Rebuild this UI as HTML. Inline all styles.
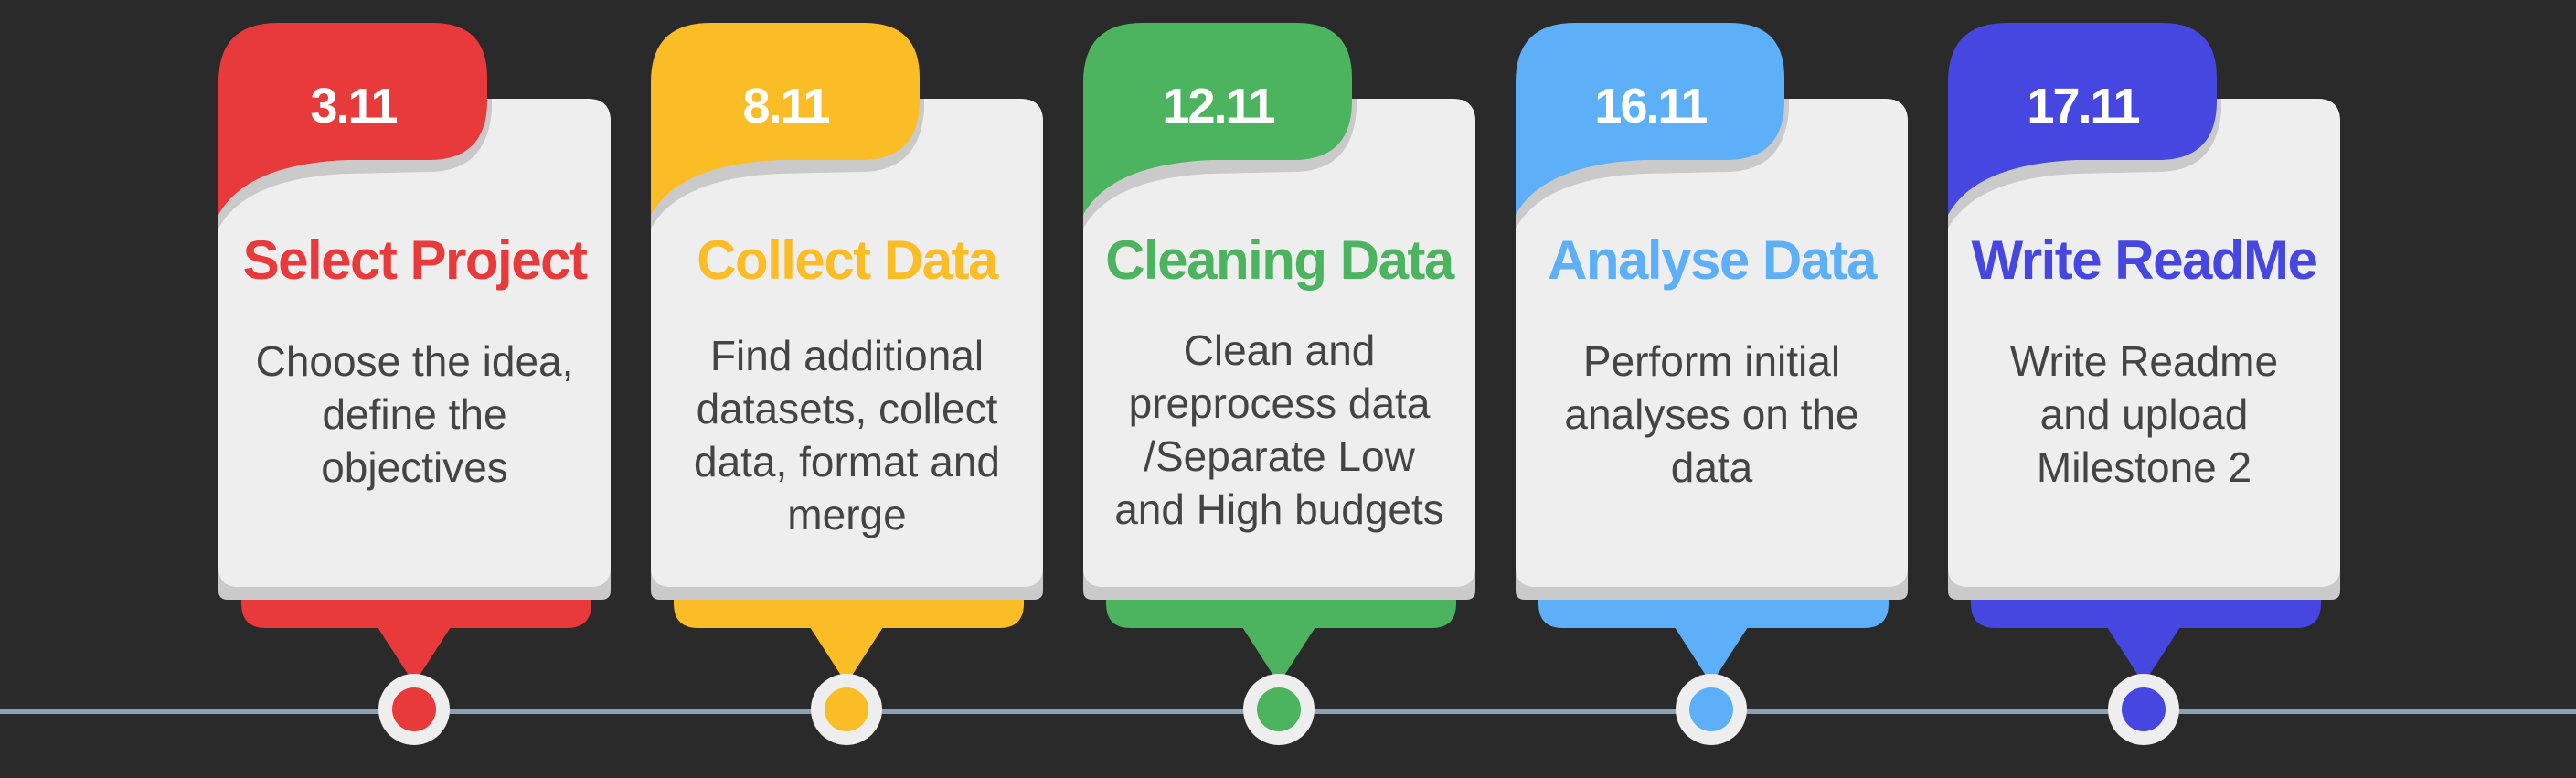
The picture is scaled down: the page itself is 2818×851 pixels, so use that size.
<!DOCTYPE html>
<html><head><style>
body{margin:0;background:#2a2a2a;width:2818px;height:851px;overflow:hidden;position:relative;font-family:"Liberation Sans",sans-serif}
.line{position:absolute;left:0;top:776px;width:2818px;height:5px;background:#8aa1b5}
.card{position:absolute;top:0;width:429px;height:851px}
.card svg{position:absolute;left:0;top:0}
.date{position:absolute;left:0;width:295px;top:86px;text-align:center;color:#fff;font-weight:bold;font-size:54px;letter-spacing:-2px;line-height:60px}
.title{position:absolute;left:-20px;width:469px;top:250px;text-align:center;font-weight:bold;font-size:60px;letter-spacing:-1.5px;line-height:70px}
.body{position:absolute;left:-10px;width:449px;text-align:center;color:#444;font-size:46px;line-height:58px}
</style></head><body>
<div class="line"></div>

<div class="card" style="left:239px">
<svg width="429" height="851"><g>
<path d="M0 118 Q0 108 10 108 L404 108 Q429 108 429 133 L429 646 Q429 656 419 656 L10 656 Q0 656 0 646 Z" fill="#cacaca"/>
<path d="M0 118 Q0 108 10 108 L404 108 Q429 108 429 133 L429 620 Q429 642 407 642 L22 642 Q0 642 0 620 Z" fill="#eeeeee"/>
<path d="M0 250 Q30 195 140 190 L230 188 Q294 188 299 120 L299 108 L0 108 Z" fill="#cacaca"/>
<path d="M0 235 Q30 180 140 175 L230 175 Q294 175 294 110 L294 85 Q294 25 234 25 L65 25 Q0 25 0 90 Z" fill="#e8393b"/>
<path d="M25 656 L408 656 L408 660 Q408 687 381 687 L52 687 Q25 687 25 660 Z" fill="#e8393b"/>
<path d="M174 686 L254 686 L214 748 Z" fill="#e8393b"/>
<circle cx="214" cy="776" r="39" fill="#eeeeee"/>
<circle cx="214" cy="776" r="24" fill="#e8393b"/>
</g></svg>
<div class="date">3.11</div>
<div class="title" style="color:#e8393b">Select Project</div>
<div class="body" style="top:366px">Choose the idea,<br>define the<br>objectives</div>
</div>

<div class="card" style="left:712px">
<svg width="429" height="851"><g>
<path d="M0 118 Q0 108 10 108 L404 108 Q429 108 429 133 L429 646 Q429 656 419 656 L10 656 Q0 656 0 646 Z" fill="#cacaca"/>
<path d="M0 118 Q0 108 10 108 L404 108 Q429 108 429 133 L429 620 Q429 642 407 642 L22 642 Q0 642 0 620 Z" fill="#eeeeee"/>
<path d="M0 250 Q30 195 140 190 L230 188 Q294 188 299 120 L299 108 L0 108 Z" fill="#cacaca"/>
<path d="M0 235 Q30 180 140 175 L230 175 Q294 175 294 110 L294 85 Q294 25 234 25 L65 25 Q0 25 0 90 Z" fill="#fbbd25"/>
<path d="M25 656 L408 656 L408 660 Q408 687 381 687 L52 687 Q25 687 25 660 Z" fill="#fbbd25"/>
<path d="M174 686 L254 686 L214 748 Z" fill="#fbbd25"/>
<circle cx="214" cy="776" r="39" fill="#eeeeee"/>
<circle cx="214" cy="776" r="24" fill="#fbbd25"/>
</g></svg>
<div class="date">8.11</div>
<div class="title" style="color:#fbbd25">Collect Data</div>
<div class="body" style="top:360px">Find additional<br>datasets, collect<br>data, format and<br>merge</div>
</div>

<div class="card" style="left:1185px">
<svg width="429" height="851"><g>
<path d="M0 118 Q0 108 10 108 L404 108 Q429 108 429 133 L429 646 Q429 656 419 656 L10 656 Q0 656 0 646 Z" fill="#cacaca"/>
<path d="M0 118 Q0 108 10 108 L404 108 Q429 108 429 133 L429 620 Q429 642 407 642 L22 642 Q0 642 0 620 Z" fill="#eeeeee"/>
<path d="M0 250 Q30 195 140 190 L230 188 Q294 188 299 120 L299 108 L0 108 Z" fill="#cacaca"/>
<path d="M0 235 Q30 180 140 175 L230 175 Q294 175 294 110 L294 85 Q294 25 234 25 L65 25 Q0 25 0 90 Z" fill="#4cb35f"/>
<path d="M25 656 L408 656 L408 660 Q408 687 381 687 L52 687 Q25 687 25 660 Z" fill="#4cb35f"/>
<path d="M174 686 L254 686 L214 748 Z" fill="#4cb35f"/>
<circle cx="214" cy="776" r="39" fill="#eeeeee"/>
<circle cx="214" cy="776" r="24" fill="#4cb35f"/>
</g></svg>
<div class="date">12.11</div>
<div class="title" style="color:#4cb35f">Cleaning Data</div>
<div class="body" style="top:354px">Clean and<br>preprocess data<br>/Separate Low<br>and High budgets</div>
</div>

<div class="card" style="left:1658px">
<svg width="429" height="851"><g>
<path d="M0 118 Q0 108 10 108 L404 108 Q429 108 429 133 L429 646 Q429 656 419 656 L10 656 Q0 656 0 646 Z" fill="#cacaca"/>
<path d="M0 118 Q0 108 10 108 L404 108 Q429 108 429 133 L429 620 Q429 642 407 642 L22 642 Q0 642 0 620 Z" fill="#eeeeee"/>
<path d="M0 250 Q30 195 140 190 L230 188 Q294 188 299 120 L299 108 L0 108 Z" fill="#cacaca"/>
<path d="M0 235 Q30 180 140 175 L230 175 Q294 175 294 110 L294 85 Q294 25 234 25 L65 25 Q0 25 0 90 Z" fill="#5db0f8"/>
<path d="M25 656 L408 656 L408 660 Q408 687 381 687 L52 687 Q25 687 25 660 Z" fill="#5db0f8"/>
<path d="M174 686 L254 686 L214 748 Z" fill="#5db0f8"/>
<circle cx="214" cy="776" r="39" fill="#eeeeee"/>
<circle cx="214" cy="776" r="24" fill="#5db0f8"/>
</g></svg>
<div class="date">16.11</div>
<div class="title" style="color:#5db0f8">Analyse Data</div>
<div class="body" style="top:366px">Perform initial<br>analyses on the<br>data</div>
</div>

<div class="card" style="left:2131px">
<svg width="429" height="851"><g>
<path d="M0 118 Q0 108 10 108 L404 108 Q429 108 429 133 L429 646 Q429 656 419 656 L10 656 Q0 656 0 646 Z" fill="#cacaca"/>
<path d="M0 118 Q0 108 10 108 L404 108 Q429 108 429 133 L429 620 Q429 642 407 642 L22 642 Q0 642 0 620 Z" fill="#eeeeee"/>
<path d="M0 250 Q30 195 140 190 L230 188 Q294 188 299 120 L299 108 L0 108 Z" fill="#cacaca"/>
<path d="M0 235 Q30 180 140 175 L230 175 Q294 175 294 110 L294 85 Q294 25 234 25 L65 25 Q0 25 0 90 Z" fill="#4646e0"/>
<path d="M25 656 L408 656 L408 660 Q408 687 381 687 L52 687 Q25 687 25 660 Z" fill="#4646e0"/>
<path d="M174 686 L254 686 L214 748 Z" fill="#4646e0"/>
<circle cx="214" cy="776" r="39" fill="#eeeeee"/>
<circle cx="214" cy="776" r="24" fill="#4646e0"/>
</g></svg>
<div class="date">17.11</div>
<div class="title" style="color:#4646e0">Write ReadMe</div>
<div class="body" style="top:366px">Write Readme<br>and upload<br>Milestone 2</div>
</div>
</body></html>
